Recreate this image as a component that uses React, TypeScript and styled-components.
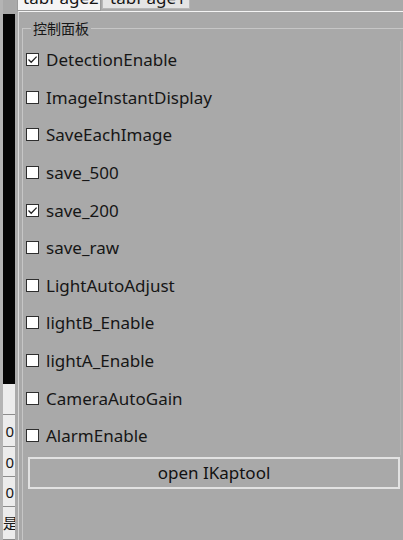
import styled, { createGlobalStyle } from "styled-components";

const GlobalStyle = createGlobalStyle`
  html, body {
    margin: 0;
    padding: 0;
    background: #a9a9a9;
    overflow: hidden;
  }
  * { box-sizing: border-box; }
`;

const StyledRoot = styled.div`
  display: flex;
  width: 403px;
  height: 540px;
  overflow: hidden;
  background: #a9a9a9;
  font-family: "Noto Sans", "Open Sans", sans-serif;
  color: #161616;
`;

const StyledEdge = styled.div`
  width: 3px;
  flex: none;
  background: #b4b4b4;
`;

const StyledDataColumn = styled.div`
  width: 12px;
  flex: none;
  display: flex;
  flex-direction: column;
  padding-top: 14px;
  overflow: hidden;
`;

const StyledBlack = styled.div`
  height: 370px;
  background: #050505;
  flex: none;
`;

const StyledCell = styled.div<{ $h: number }>`
  height: ${(p) => p.$h}px;
  flex: none;
  background: #ececec;
  border-bottom: 1px solid #8c8c8c;
  font-size: 15px;
  line-height: ${(p) => p.$h}px;
  text-align: right;
  white-space: nowrap;
  overflow: hidden;
  padding-right: 1px;
  font-family: "Noto Sans", "Noto Sans CJK SC", sans-serif;
`;

const StyledSpacer = styled.div`
  width: 3px;
  flex: none;
  background: #aaaaaa;
`;

const StyledMain = styled.div`
  flex: 1;
  display: flex;
  flex-direction: column;
  min-width: 0;
`;

const StyledTabStrip = styled.div`
  height: 11px;
  flex: none;
  display: flex;
  align-items: stretch;
  margin-left: -1px;
  overflow: hidden;
`;

const StyledTab = styled.div<{ $active?: boolean }>`
  width: ${(p) => (p.$active ? 84 : 88)}px;
  height: ${(p) => (p.$active ? 11 : 9)}px;
  background: ${(p) => (p.$active ? "#f4f4f4" : "#e4e4e4")};
  border: 1px solid ${(p) => (p.$active ? "#9a9a9a" : "#b8b8b8")};
  border-top: none;
  margin-right: 1px;
  overflow: hidden;
  font-size: 17px;
  line-height: 17px;
  padding-left: ${(p) => (p.$active ? 5 : 7)}px;
  white-space: nowrap;
`;

const StyledTabLabel = styled.div`
  margin-top: -11px;
`;

const StyledTabPage = styled.div`
  flex: 1;
  border-top: 1px solid #f4f4f4;
  border-left: 1px solid #d8d8d8;
  padding: 8px 0 0 3px;
`;

const StyledGroup = styled.fieldset`
  margin: 0;
  padding: 0;
  min-width: 0;
  width: 420px;
  height: 560px;
  border: 1px solid #c6c6c6;
`;

const StyledLegend = styled.legend`
  margin-left: 8px;
  padding: 0 2px;
  font-family: "Noto Sans CJK SC", sans-serif;
  font-size: 14px;
  line-height: 16px;
  color: #161616;
`;

const StyledList = styled.div`
  margin-top: 5px;
  width: 378px;
  border-right: 1px solid #b3b3b3;
  padding-left: 3px;
  display: flex;
  flex-direction: column;
`;

const StyledRow = styled.label`
  height: 37.6px;
  display: flex;
  align-items: center;
  gap: 7px;
  font-size: 17px;
  white-space: nowrap;
`;

const StyledBox = styled.span`
  width: 13px;
  height: 13px;
  flex: none;
  background: #ffffff;
  border: 1px solid #2e2e2e;
  display: flex;
  align-items: center;
  justify-content: center;
`;

const StyledButton = styled.button`
  margin: 2px 0 0 5px;
  width: 372px;
  height: 32px;
  background: #a9a9a9;
  border: 2px solid #e2e2e2;
  font-family: "Noto Sans", "Open Sans", sans-serif;
  font-size: 17px;
  color: #111111;
  padding: 0;
`;

const options: [string, boolean][] = [
  ["DetectionEnable", true],
  ["ImageInstantDisplay", false],
  ["SaveEachImage", false],
  ["save_500", false],
  ["save_200", true],
  ["save_raw", false],
  ["LightAutoAdjust", false],
  ["lightB_Enable", false],
  ["lightA_Enable", false],
  ["CameraAutoGain", false],
  ["AlarmEnable", false],
];

const cells: [string, number][] = [
  ["", 31],
  ["0", 32],
  ["0", 30],
  ["0", 30],
  ["是", 33],
];

const Check = ({ checked }: { checked: boolean }) => (
  <StyledBox>
    {checked && (
      <svg width="11" height="11" viewBox="0 0 11 11">
        <path d="M1.5 5.5 L4.2 8.2 L9.6 2.6" fill="none" stroke="#222" strokeWidth="1.3" />
      </svg>
    )}
  </StyledBox>
);

export default function App() {
  return (
    <StyledRoot>
      <GlobalStyle />
      <StyledEdge />
      <StyledDataColumn>
        <StyledBlack />
        {cells.map(([t, h], i) => (
          <StyledCell key={i} $h={h}>
            {t}
          </StyledCell>
        ))}
      </StyledDataColumn>
      <StyledSpacer />
      <StyledMain>
        <StyledTabStrip>
          <StyledTab $active>
            <StyledTabLabel>tabPage2</StyledTabLabel>
          </StyledTab>
          <StyledTab>
            <StyledTabLabel>tabPage1</StyledTabLabel>
          </StyledTab>
        </StyledTabStrip>
        <StyledTabPage>
          <StyledGroup>
            <StyledLegend>控制面板</StyledLegend>
            <StyledList>
              {options.map(([name, on]) => (
                <StyledRow key={name}>
                  <Check checked={on} />
                  {name}
                </StyledRow>
              ))}
            </StyledList>
            <StyledButton>open IKaptool</StyledButton>
          </StyledGroup>
        </StyledTabPage>
      </StyledMain>
    </StyledRoot>
  );
}
